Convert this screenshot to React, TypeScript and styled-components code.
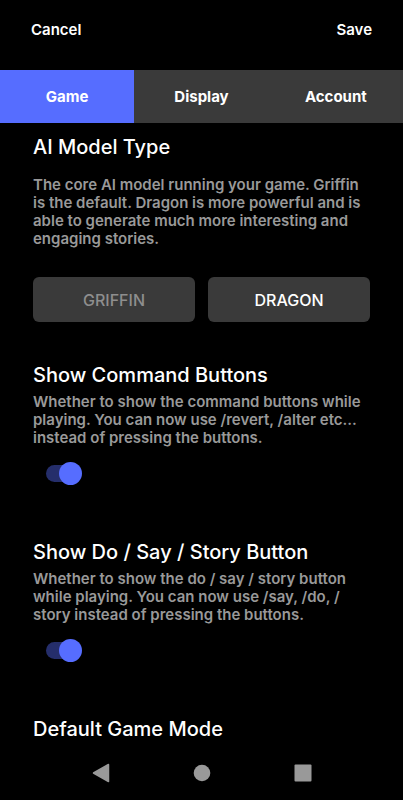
import React, { useState } from "react";
import styled, { createGlobalStyle } from "styled-components";

const GlobalStyle = createGlobalStyle`
  * { box-sizing: border-box; }
  body { margin: 0; background: #000; }
  button { font: inherit; border: 0; margin: 0; cursor: pointer; }
`;

const Screen = styled.div`
  display: flex;
  flex-direction: column;
  height: 100vh;
  overflow: hidden;
  background: #000;
  color: #fff;
  font-family: Inter, "Liberation Sans", sans-serif;
  font-weight: 500;
`;

const TopBar = styled.header`
  display: flex;
  flex: none;
  justify-content: space-between;
  padding: 20px 31px 30px;
`;

const TextButton = styled.button`
  && { font-weight: 600; }
  padding: 0;
  background: none;
  color: #fff;
  font-size: 15px;
  line-height: 20px;
`;

const Tabs = styled.nav`
  display: grid;
  flex: none;
  grid-template-columns: repeat(3, 1fr);
`;

const Tab = styled.button<{ $active: boolean }>`
  && { font-weight: 700; }
  height: 53px;
  padding: 0;
  background: ${(p) => (p.$active ? "#566dff" : "#3a3a3a")};
  color: #fff;
  font-size: 15px;
`;

const Content = styled.main`
  flex: 1;
  min-height: 0;
  overflow-y: auto;
  scrollbar-width: none;
  padding: 10px 33px 0;
`;

const Section = styled.section<{ $space: number }>`
  margin-bottom: ${(p) => p.$space}px;
`;

const Title = styled.h2`
  margin: 0;
  font-size: 20px;
  font-weight: 500;
  line-height: 28px;
`;

const Description = styled.p<{ $gap: number }>`
  margin: ${(p) => p.$gap}px 0 0;
  color: #999;
  font-size: 15px;
  font-weight: 600;
  line-height: 18px;
`;

const Choices = styled.div`
  display: grid;
  grid-template-columns: 1fr 1fr;
  gap: 13px;
  margin-top: 29px;
`;

const Choice = styled.button<{ $dim: boolean }>`
  height: 45px;
  padding: 0;
  border-radius: 6px;
  background: #3a3a3a;
  color: ${(p) => (p.$dim ? "#8e8e8e" : "#fff")};
  font-size: 16px;
`;

const Switch = styled.input`
  appearance: none;
  display: flex;
  align-items: center;
  width: 36px;
  height: 23px;
  margin: 15px 0 0 13px;
  cursor: pointer;

  &::before {
    content: "";
    flex: none;
    width: 34px;
    height: 17px;
    border-radius: 9px;
    background: #3a3a3a;
  }
  &::after {
    content: "";
    flex: none;
    width: 23px;
    height: 23px;
    margin-left: -34px;
    border-radius: 50%;
    background: #999;
  }
  &:checked::before { background: #252e6b; }
  &:checked::after { margin-left: -21px; background: #566dff; }
`;

const SystemBar = styled.footer`
  display: grid;
  flex: none;
  grid-template-columns: repeat(3, 1fr);
  align-items: center;
  height: 54px;
  padding: 0 50px;
`;

const SystemButton = styled.button`
  display: flex;
  justify-content: center;
  padding: 0;
  background: none;
  color: #999;
`;

type ToggleProps = { id: string; title: string; children: React.ReactNode };

function ToggleSection({ id, title, children }: ToggleProps) {
  const [on, setOn] = useState(true);
  return (
    <Section $space={53}>
      <Title><label htmlFor={id}>{title}</label></Title>
      <Description $gap={4} id={`${id}-text`}>{children}</Description>
      <Switch
        id={id}
        type="checkbox"
        role="switch"
        aria-describedby={`${id}-text`}
        checked={on}
        onChange={(e) => setOn(e.target.checked)}
      />
    </Section>
  );
}

export default function App() {
  const [tab, setTab] = useState("Game");
  const [model, setModel] = useState("DRAGON");
  return (
    <Screen>
      <GlobalStyle />
      <TopBar>
        <TextButton>Cancel</TextButton>
        <TextButton>Save</TextButton>
      </TopBar>
      <Tabs>
        {["Game", "Display", "Account"].map((name) => (
          <Tab key={name} $active={tab === name} onClick={() => setTab(name)}>
            {name}
          </Tab>
        ))}
      </Tabs>
      <Content>
        <Section $space={39}>
          <Title>AI Model Type</Title>
          <Description $gap={15}>
            The core AI model running your game. Griffin is the default. Dragon is more powerful
            and is able to generate much more interesting and engaging stories.
          </Description>
          <Choices>
            {["GRIFFIN", "DRAGON"].map((name) => (
              <Choice key={name} $dim={model !== name} onClick={() => setModel(name)}>
                {name}
              </Choice>
            ))}
          </Choices>
        </Section>
        <ToggleSection id="command-buttons" title="Show Command Buttons">
          Whether to show the command buttons while playing. You can now use /revert, /alter etc...
          instead of pressing the buttons.
        </ToggleSection>
        <ToggleSection id="story-button" title="Show Do / Say / Story Button">
          Whether to show the do / say / story button while playing. You can now use /say, /do, /
          <wbr />
          story instead of pressing the buttons.
        </ToggleSection>
        <Title>Default Game Mode</Title>
      </Content>
      <SystemBar>
        <SystemButton aria-label="Back">
          <svg width="18" height="20" viewBox="0 0 18 20">
            <path d="M1.5 10 L16.5 1.5 V18.5 Z" fill="currentColor" stroke="currentColor" strokeWidth="1.5" strokeLinejoin="round" />
          </svg>
        </SystemButton>
        <SystemButton aria-label="Home">
          <svg width="18" height="18" viewBox="0 0 18 18">
            <circle cx="9" cy="9" r="8.3" fill="currentColor" />
          </svg>
        </SystemButton>
        <SystemButton aria-label="Recent apps">
          <svg width="18" height="18" viewBox="0 0 18 18">
            <rect x="0.5" y="0.5" width="17" height="17" rx="1" fill="currentColor" />
          </svg>
        </SystemButton>
      </SystemBar>
    </Screen>
  );
}
